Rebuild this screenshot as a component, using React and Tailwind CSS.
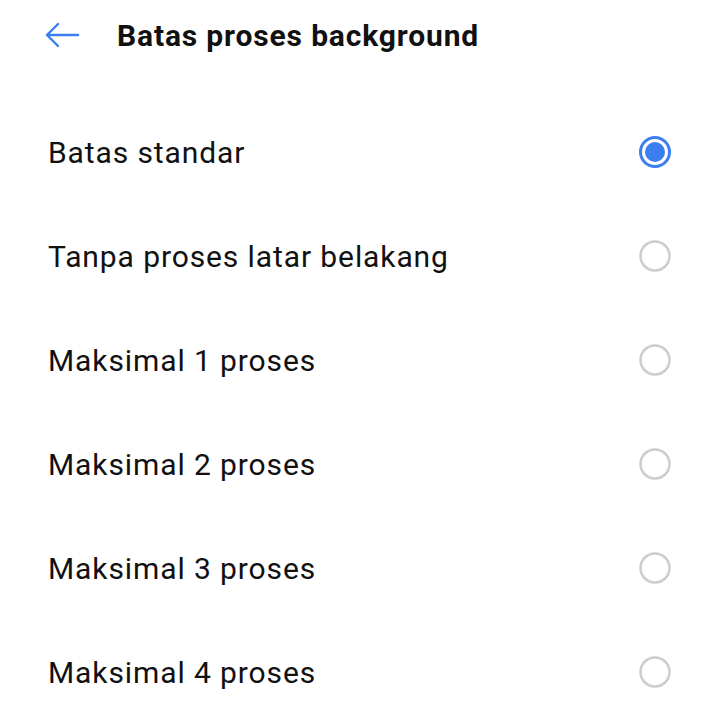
import React from "react";

const items = [
  "Batas standar",
  "Tanpa proses latar belakang",
  "Maksimal 1 proses",
  "Maksimal 2 proses",
  "Maksimal 3 proses",
  "Maksimal 4 proses",
];

function Radio({ on }) {
  return on ? (
    <svg width="34" height="34" viewBox="0 0 34 34">
      <circle cx="17" cy="17" r="14.5" fill="none" stroke="#3a7ef0" strokeWidth="3" />
      <circle cx="17" cy="17" r="10" fill="#3a7ef0" />
    </svg>
  ) : (
    <svg width="34" height="34" viewBox="0 0 34 34">
      <circle cx="17" cy="17" r="14.5" fill="none" stroke="#cdcdcd" strokeWidth="2.5" />
    </svg>
  );
}

export default function App() {
  return (
    <div className="w-[720px] h-[720px] bg-white overflow-hidden" style={{ fontFamily: "Roboto, sans-serif" }}>
      <div className="h-[70px] flex items-center">
        <div className="w-[117px] flex items-center pl-[44px]">
          <svg width="36" height="26" viewBox="0 0 36 26">
            <path d="M34 13H3M14 2L3 13l11 11" fill="none" stroke="#3a7ef0" strokeWidth="2.4" strokeLinecap="round" strokeLinejoin="round" />
          </svg>
        </div>
        <div className="text-[30px] font-bold text-[#111] tracking-[0.85px]">Batas proses background</div>
      </div>
      <div className="pt-[30px]">
        {items.map((t, i) => (
          <div key={t} className="h-[104px] flex items-center justify-between pl-[48px] pr-[48px]">
            <span className="text-[30px] text-[#111] tracking-[0.9px]">{t}</span>
            <Radio on={i === 0} />
          </div>
        ))}
      </div>
    </div>
  );
}
